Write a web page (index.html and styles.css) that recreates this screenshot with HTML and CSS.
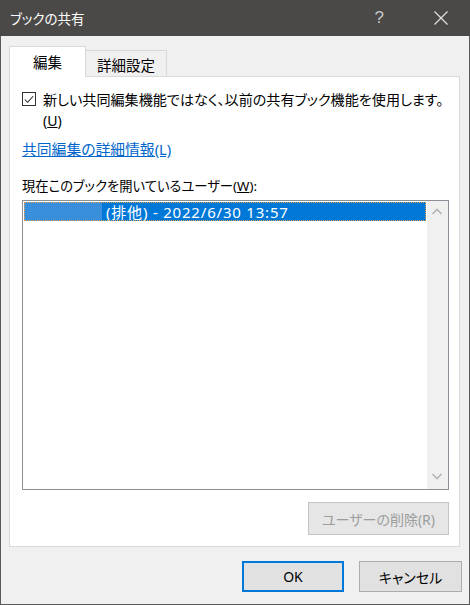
FILE: index.html
```html
<!DOCTYPE html>
<html lang="ja">
<head>
  <meta charset="UTF-8">
  <title>ブックの共有</title>
  <link rel="stylesheet" href="styles.css">
</head>
<body>

  <div class="dialog">
    <!-- タイトルバー -->
    <div class="titlebar">
      <span class="title">ブックの共有</span>
      <span class="help">?</span>
      <span class="close">
        <svg width="14" height="14" viewBox="0 0 14 14"><path d="M0.5 0.5 L13.5 13.5 M13.5 0.5 L0.5 13.5" stroke="#e6e6e6" stroke-width="1.1" fill="none"/></svg>
      </span>
    </div>

    <div class="content">
      <div class="tabs">
        <div class="tab active">編集</div>
        <div class="tab">詳細設定</div>
      </div>

      <div class="panel">
        <label class="check">
          <span class="box">
            <svg width="13" height="13" viewBox="0 0 13 13"><path d="M2 6.5 L5 9.5 L11 3" stroke="#222" stroke-width="1.1" fill="none"/></svg>
          </span>
          <span class="check-text">新しい共同編集機能ではなく、以前の共有ブック機能を使用します。<br>(<u>U</u>)</span>
        </label>

        <a class="link" href="#">共同編集の詳細情報(L)</a>

        <div class="label">現在このブックを開いているユーザー(<u>W</u>):</div>

        <div class="listbox">
          <div class="items">
            <div class="item selected"><span class="redact"></span>(排他) - 2022/6/30 13:57</div>
          </div>
          <div class="scrollbar">
            <svg width="20" height="18" viewBox="0 0 20 18"><path d="M5.5 11 L10 6.5 L14.5 11" stroke="#b4b4b4" stroke-width="1.6" fill="none"/></svg>
            <svg width="20" height="18" viewBox="0 0 20 18"><path d="M5.5 7 L10 11.5 L14.5 7" stroke="#b4b4b4" stroke-width="1.6" fill="none"/></svg>
          </div>
        </div>

        <div class="panel-actions">
          <button class="btn-remove" disabled>ユーザーの削除(R)</button>
        </div>
      </div>

      <div class="footer">
        <button class="btn btn-ok">OK</button>
        <button class="btn">キャンセル</button>
      </div>
    </div>
  </div>

</body>
</html>
```

FILE: styles.css
```css
/* 基本スタイル */
body {
  margin: 0;
  font-family: "Noto Sans", "Noto Sans CJK JP", sans-serif;
  font-feature-settings: "palt";
  color: #000;
  background-color: #fff;
}

.dialog {
  width: 470px;
  height: 605px;
  box-sizing: border-box;
  border: 1px solid #5a5a5a;
  border-top: none;
  background-color: #f0f0f0;
  display: flex;
  flex-direction: column;
}

/* タイトルバー */
.titlebar {
  height: 36px;
  margin: 0 -1px;
  background-color: #4b4947;
  color: #fff;
  display: flex;
  align-items: center;
  font-size: 13.5px;
}

.title {
  margin-left: 10px;
  flex: 1;
}

.help {
  font-family: "Liberation Sans", sans-serif;
  font-size: 17px;
  color: #c8c8c8;
  margin-right: 50px;
}

.close {
  display: flex;
  margin-right: 22px;
}

/* 本体 */
.content {
  flex: 1;
  padding: 11px 9px 0 8px;
  display: flex;
  flex-direction: column;
}

.tabs {
  display: flex;
  align-items: flex-end;
  height: 30px;
  margin-bottom: -1px;
}

.tab {
  height: 27px;
  box-sizing: border-box;
  padding: 0 11px;
  border: 1px solid #d9d9d9;
  border-bottom: none;
  border-left: none;
  font-size: 14.5px;
  display: flex;
  align-items: center;
  justify-content: center;
}

.tab.active {
  width: 77px;
  height: 31px;
  background-color: #fff;
  border-left: 1px solid #d9d9d9;
  position: relative;
  z-index: 1;
  padding-bottom: 2px;
}

.panel {
  height: 471px;
  box-sizing: border-box;
  background-color: #fff;
  border: 1px solid #d9d9d9;
  padding: 12px 10px 11px 12px;
  display: flex;
  flex-direction: column;
  align-items: flex-start;
  font-size: 14px;
}

.check {
  display: flex;
  align-items: flex-start;
  line-height: 21px;
}

.check-text {
  font-size: 14.1px;
  white-space: nowrap;
}

.box {
  width: 14px;
  height: 14px;
  box-sizing: border-box;
  border: 1px solid #333;
  margin: 3px 7px 0 0;
  display: flex;
  align-items: center;
  justify-content: center;
}

.link {
  margin-top: 8px;
  line-height: 20px;
  font-size: 14.8px;
  color: #0066cc;
  text-decoration: underline;
}

.label {
  margin-top: 17px;
  line-height: 20px;
  font-size: 13.3px;
}

/* ユーザー一覧 */
.listbox {
  margin-top: 4px;
  width: 427px;
  height: 290px;
  box-sizing: border-box;
  border: 1px solid #8c8f95;
  display: flex;
}

.items {
  flex: 1;
  padding: 1px;
}

.item {
  height: 19px;
  line-height: 18px;
  display: flex;
  align-items: center;
  font-size: 15px;
  letter-spacing: 0.8px;
}

.item.selected {
  background-color: #0078d7;
  color: #fff;
  outline: 1px dotted #e5a14a;
  outline-offset: -1px;
}

.redact {
  width: 78px;
  height: 19px;
  margin-right: 4px;
  background-color: #3a8fdd;
}

.scrollbar {
  width: 21px;
  background-color: #f0f0f0;
  display: flex;
  flex-direction: column;
  justify-content: space-between;
  padding: 2px 0 4px;
}

.panel-actions {
  align-self: stretch;
  display: flex;
  justify-content: flex-end;
  margin-top: 12px;
}

.btn-remove {
  width: 141px;
  height: 33px;
  font-family: inherit;
  font-size: 14px;
  font-feature-settings: "palt";
  color: #9d9d9d;
  background-color: #e6e6e6;
  border: 1px solid #c4c4c4;
  padding: 0;
}

/* 下部ボタン */
.footer {
  display: flex;
  justify-content: flex-end;
  gap: 15px;
  margin: 14px -2px 0 0;
}

.btn {
  width: 103px;
  height: 31px;
  font-family: inherit;
  font-size: 14px;
  font-feature-settings: "palt";
  background-color: #e1e1e1;
  border: 1px solid #adadad;
  padding: 0;
  color: #000;
}

.btn-ok {
  width: 102px;
  border: 2px solid #0078d7;
}
```
